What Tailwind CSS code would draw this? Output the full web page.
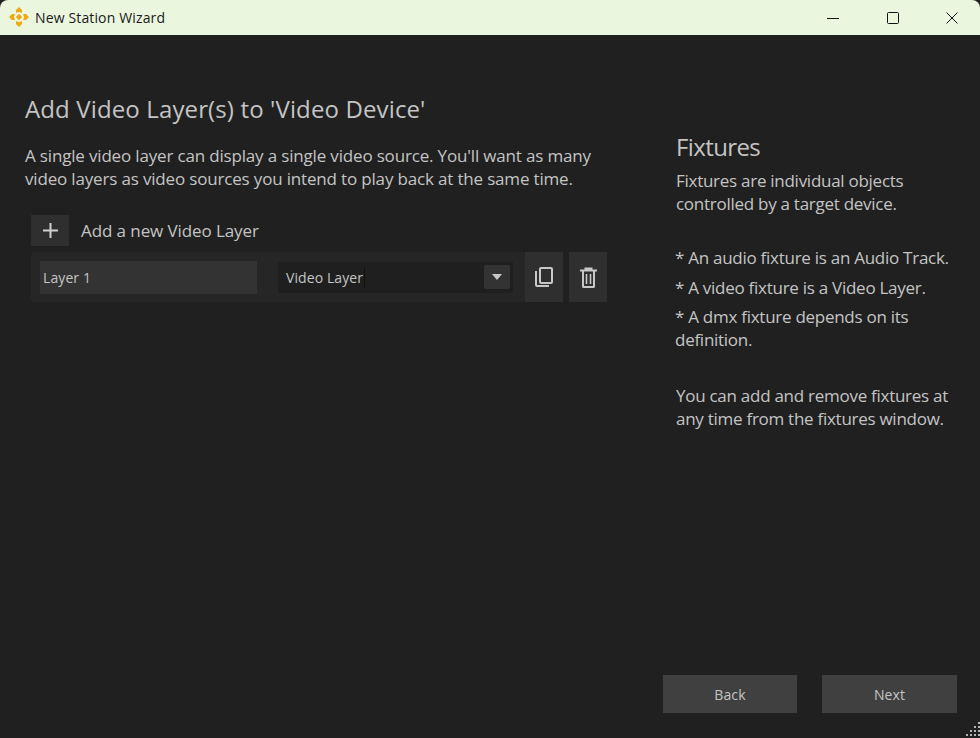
<!DOCTYPE html>
<html lang="en">
<head>
  <meta charset="UTF-8" />
  <title>New Station Wizard</title>
  <script src="https://cdn.jsdelivr.net/npm/@tailwindcss/browser@4"></script>
</head>
<body class="h-[738px] w-[980px] overflow-hidden flex flex-col bg-[#202020] text-[#c4c4c4] font-['Open_Sans',sans-serif]">

  <!-- Title bar -->
  <header class="h-[35px] shrink-0 bg-[#ebf6df] flex items-center rounded-t-[8px]">
    <svg class="w-5 h-5 ml-[9px] -mt-[2px]" viewBox="0 0 20 20" fill="#eeaa10">
      <path d="M10 0l3 3v2.500l-1 .3-2-1-2 1-1-.3v-2.500z" />
      <path d="M10 20l3-3v-2.500l-1-.3-2 1-2-1-1 .3v2.500z" />
      <path d="M0 10l3-3h2.500l.3 1-1 2 1 2-.3 1h-2.500z" />
      <path d="M20 10l-3-3h-2.500l-.3 1 1 2-1 2 .3 1h2.500z" />
      <path d="M10 6.800l3.200 3.200-3.200 3.200-3.200-3.200z" />
    </svg>
    <span class="ml-[6px] text-[14px] tracking-[0.14px] text-[#1a1a1a]">New Station Wizard</span>
    <div class="ml-auto flex items-center h-full text-[#111]">
      <button class="w-[59px] h-full flex items-center justify-center">
        <svg class="w-3 h-3" viewBox="0 0 12 12" stroke="currentColor" fill="none"><path d="M0 6.500h12" /></svg>
      </button>
      <button class="w-[59px] h-full flex items-center justify-center pl-[2px]">
        <svg class="w-3 h-3" viewBox="0 0 12 12" stroke="currentColor" fill="none"><rect x="0.500" y="0.500" width="11" height="11" rx="1" /></svg>
      </button>
      <button class="w-[59px] h-full flex items-center justify-center pl-[2px]">
        <svg class="w-3 h-3" viewBox="0 0 12 12" stroke="currentColor" fill="none"><path d="M0.500 0.500l11 11M11.500 0.500l-11 11" /></svg>
      </button>
    </div>
  </header>

  <main class="flex-1 flex relative">
    <!-- Left column -->
    <section class="w-[651px] pl-[25px] pt-[58px] shrink-0">
      <h1 class="text-[24px] leading-[32px] tracking-[0.13px]">Add Video Layer(s) to 'Video Device'</h1>
      <p class="mt-[19px] text-[17px] leading-[23px] tracking-[-0.17px]">A single video layer can display a single video source. You'll want as many<br />video layers as video sources you intend to play back at the same time.</p>

      <div class="mt-[25px] ml-[6px] flex items-center h-[31px]">
        <button class="w-[38px] h-[31px] bg-[#2f2f2f] flex items-center justify-center">
          <svg class="w-[15px] h-[15px]" viewBox="0 0 15 15" stroke="#d0d0d0" stroke-width="2" fill="none"><path d="M7.500 0v15M0 7.500h15" /></svg>
        </button>
        <span class="ml-[12px] text-[17px] tracking-[-0.09px]">Add a new Video Layer</span>
      </div>

      <!-- Layer row -->
      <div class="mt-[6px] ml-[6px] w-[576px] h-[50px] flex items-center">
        <div class="w-[494px] h-[50px] bg-[#262626] rounded-[4px] flex items-center pl-[9px]">
          <div class="w-[217px] h-[33px] bg-[#333333] flex items-center pl-[3px] text-[14px] tracking-[0.1px]">Layer 1</div>
          <div class="ml-[21px] w-[235px] h-[31px] bg-[#1f1f1f] flex items-center pl-[8px] pr-[3px] text-[14px] tracking-[0.1px]">
            <span class="border-r border-[#111] pr-px">Video Layer</span>
            <span class="ml-auto w-[26px] h-[24px] bg-[#333333] rounded-[2px] flex items-center justify-center">
              <svg class="w-[10px] h-[6px]" viewBox="0 0 10 6" fill="#c8c8c8"><path d="M0 0h10l-5 6z" /></svg>
            </span>
          </div>
        </div>
        <button class="w-[38px] h-[50px] bg-[#2f2f2f] flex items-center justify-center">
          <svg class="w-6 h-6" viewBox="0 0 24 24" fill="none" stroke="#c8c8c8" stroke-width="2"><rect x="8" y="3" width="12" height="15" rx="1" /><path d="M4 6v14c0 .6.400 1 1 1h12" /></svg>
        </button>
        <button class="ml-[6px] w-[38px] h-[50px] bg-[#2f2f2f] flex items-center justify-center">
          <svg class="w-6 h-6" viewBox="0 0 24 24" fill="none" stroke="#c8c8c8" stroke-width="2"><path d="M4 5.500h17M9.500 5V3.500h6V5M7 6v15.500c0 .3.200.5.500.5h10c.3 0 .5-.2.500-.5V6" /><path stroke-width="1.600" d="M10.500 9v10M14.500 9v10" /></svg>
        </button>
      </div>
    </section>

    <!-- Help column -->
    <aside class="pl-[25px] pt-[96px] w-[329px] text-[17px] leading-[23px] tracking-[-0.27px]">
      <h2 class="text-[24px] leading-[32px] tracking-[-0.6px]">Fixtures</h2>
      <p class="mt-[6px]">Fixtures are individual objects<br />controlled by a target device.</p>
      <p class="mt-[31px] -ml-px">* An audio fixture is an Audio Track.</p>
      <p class="mt-[7px] -ml-px">* A video fixture is a Video Layer.</p>
      <p class="mt-[6px] -ml-px">* A dmx fixture depends on its<br />definition.</p>
      <p class="mt-[33px]">You can add and remove fixtures at<br />any time from the fixtures window.</p>
    </aside>

    <!-- Footer buttons -->
    <div class="absolute right-[23px] bottom-[25px] flex gap-[25px]">
      <button class="w-[134px] h-[38px] bg-[#404040] text-[14px] tracking-[0.1px]">Back</button>
      <button class="w-[135px] h-[38px] bg-[#404040] text-[14px] tracking-[0.1px]">Next</button>
    </div>

    <!-- Resize grip -->
    <svg class="absolute right-0 bottom-[2px] w-[14px] h-[14px]" viewBox="0 0 14 14" fill="#b4b4b4">
      <rect x="12" y="0" width="2" height="2" /><rect x="8" y="4" width="2" height="2" /><rect x="12" y="4" width="2" height="2" />
      <rect x="4" y="8" width="2" height="2" /><rect x="8" y="8" width="2" height="2" /><rect x="12" y="8" width="2" height="2" />
      <rect x="0" y="12" width="2" height="2" /><rect x="4" y="12" width="2" height="2" /><rect x="8" y="12" width="2" height="2" /><rect x="12" y="12" width="2" height="2" />
    </svg>
  </main>
</body>
</html>
